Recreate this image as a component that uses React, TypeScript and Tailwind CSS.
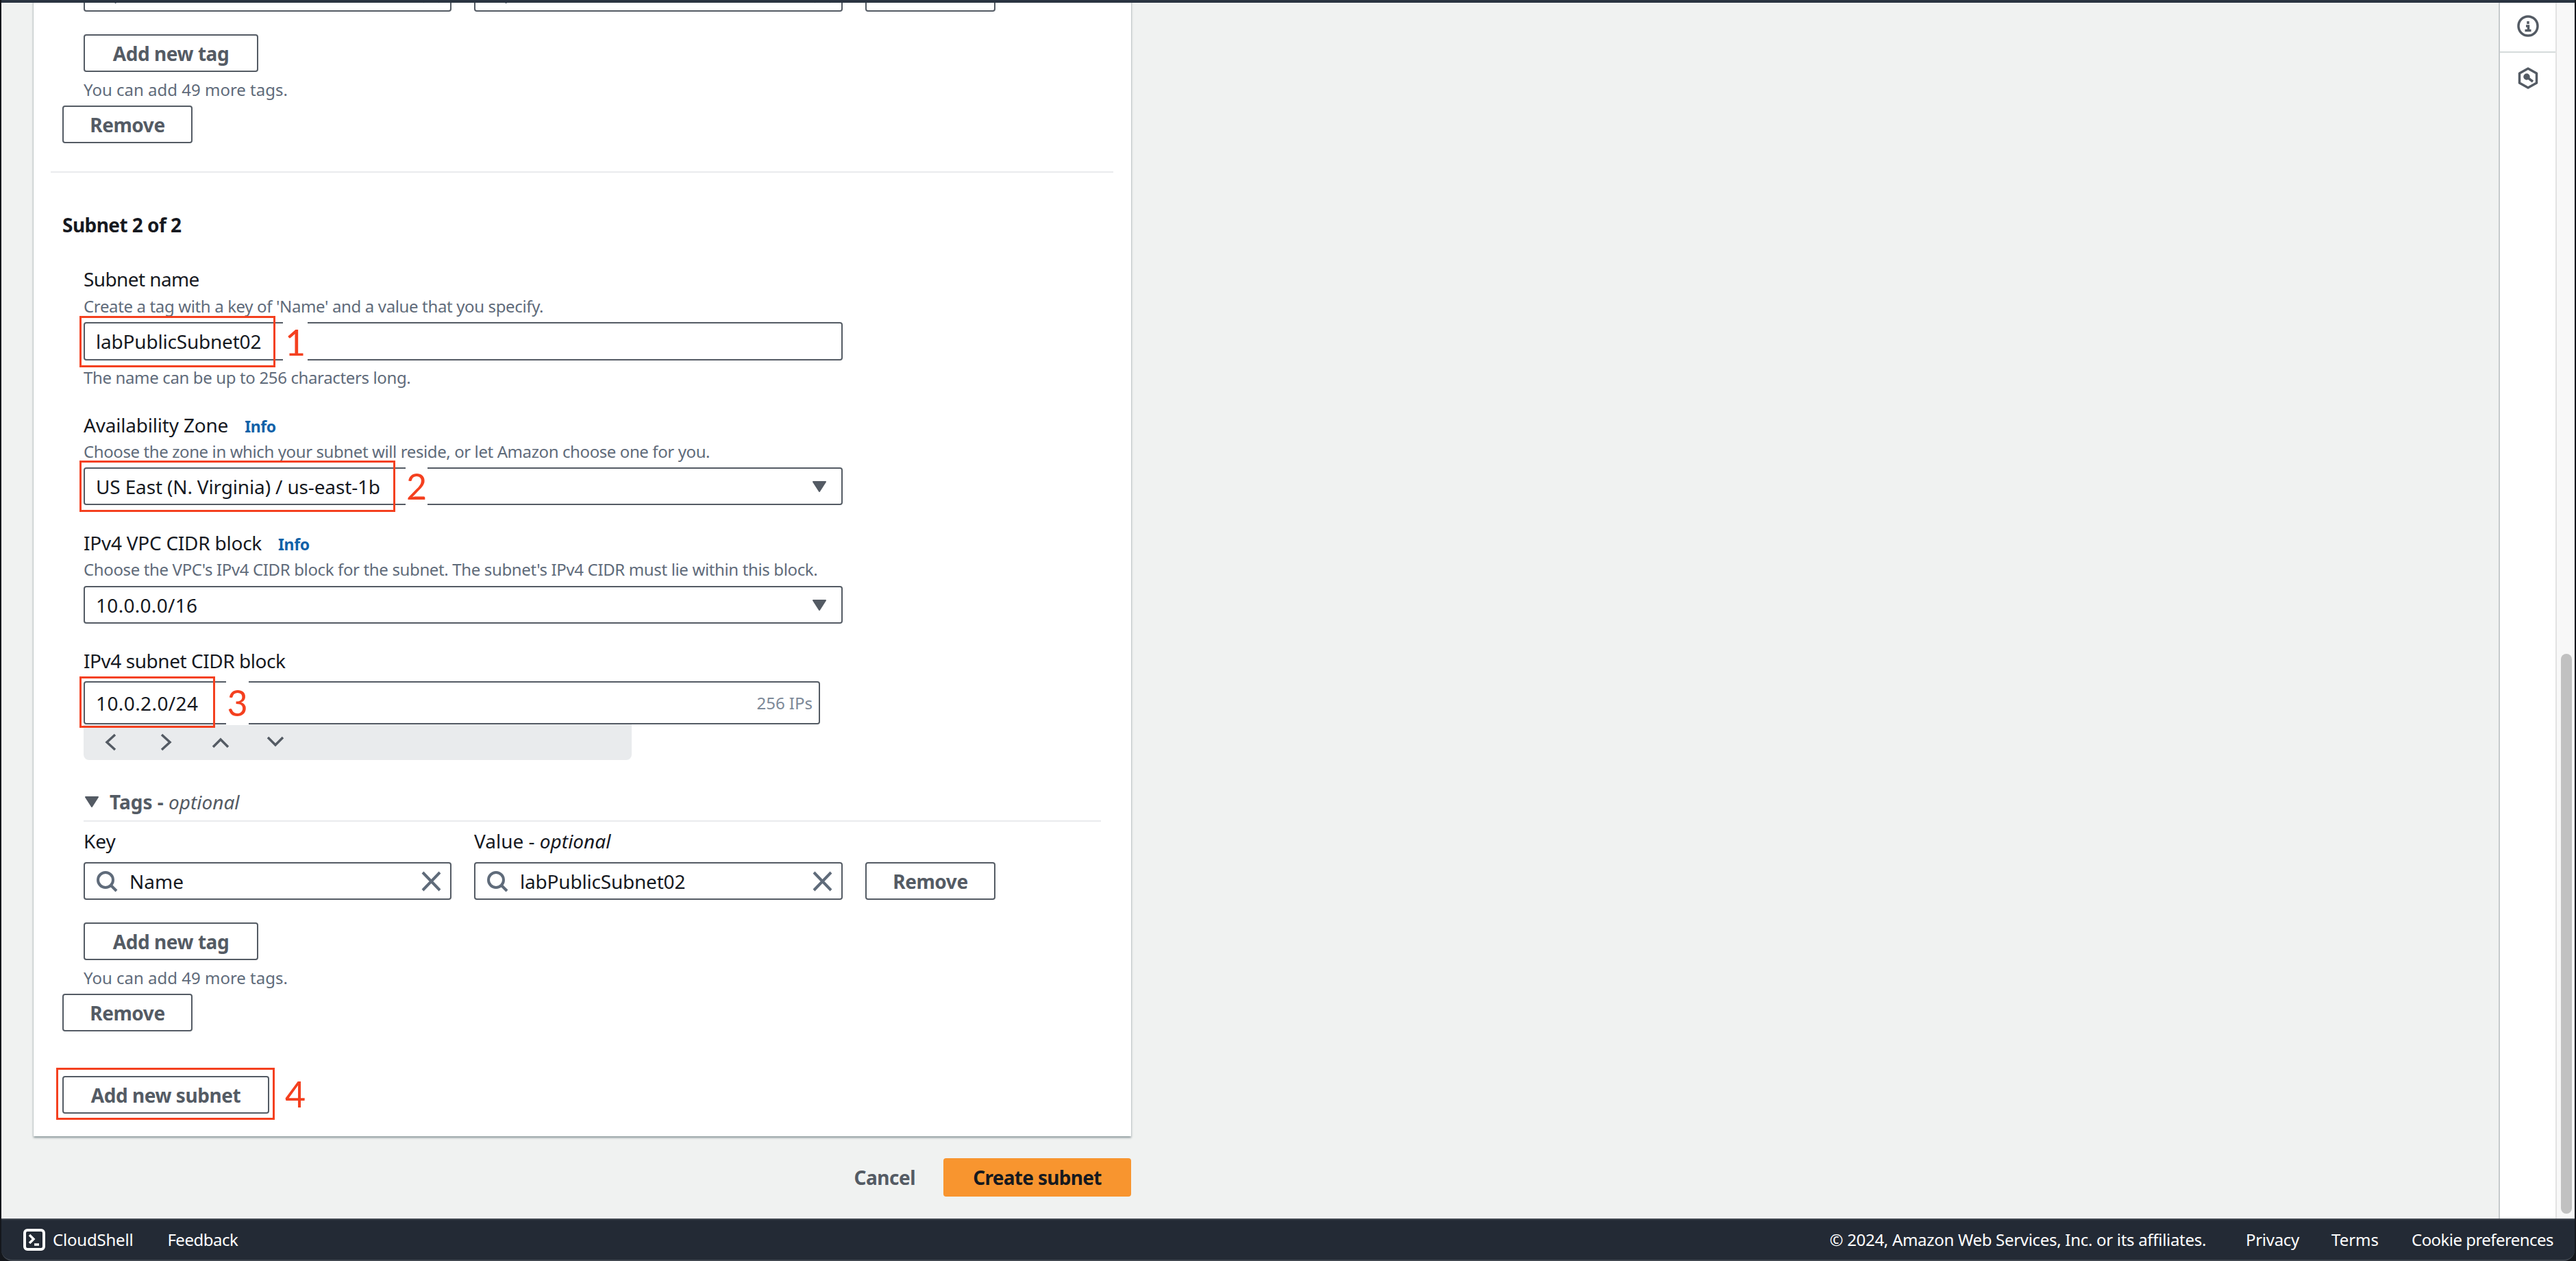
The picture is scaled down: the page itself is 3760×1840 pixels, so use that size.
import React from 'react'

const Label: React.FC<{ className?: string; children: React.ReactNode }> = ({ className = '', children }) => (
  <div className={`h-[32px] text-[28px] leading-[30px] text-[#16191f] whitespace-nowrap ${className}`}>{children}</div>
)

const Help: React.FC<{ className?: string; children: React.ReactNode }> = ({ className = '', children }) => (
  <div className={`h-[32px] text-[24px] leading-[32px] text-[#5f6b7a] whitespace-nowrap ${className}`}>{children}</div>
)

const Button: React.FC<{ className?: string; children: React.ReactNode }> = ({ className = '', children }) => (
  <button className={`flex h-[55px] items-center justify-center rounded-[4px] border-2 border-[#545b64] bg-white text-[28px] font-bold tracking-[-0.45px] text-[#545b64] ${className}`}>
    {children}
  </button>
)

const Info: React.FC = () => <span className="text-[23px] font-bold tracking-[-0.4px] text-[#0f62a8]">Info</span>

const Caret: React.FC<{ className?: string }> = ({ className = '' }) => (
  <svg viewBox="0 0 20 16" className={`h-[16px] w-[20px] ${className}`}>
    <path d="M1 1h18L10 15z" fill="#545b64" stroke="#545b64" strokeWidth="2" strokeLinejoin="round" />
  </svg>
)

const Search: React.FC = () => (
  <svg viewBox="0 0 32 32" className="h-[32px] w-[32px] shrink-0" fill="none" stroke="#5f6b7a" strokeWidth="4">
    <circle cx="14" cy="14" r="11" />
    <path d="M22 22l8 8" />
  </svg>
)

const Close: React.FC = () => (
  <svg viewBox="0 0 32 32" className="h-[32px] w-[32px] shrink-0" fill="none" stroke="#5f6b7a" strokeWidth="4">
    <path d="M4 3l25 26M29 3L4 29" />
  </svg>
)

const Chevron: React.FC<{ d: string }> = ({ d }) => (
  <svg viewBox="0 0 32 32" className="h-[32px] w-[32px]" fill="none" stroke="#545b64" strokeWidth="3.5">
    <path d={d} />
  </svg>
)

// red box + numbered callout drawn over a field
const Annotation: React.FC<{ box: string; gap: string; num: string }> = ({ box, gap, num }) => (
  <>
    <div className={`absolute flex items-center justify-center bg-white text-[52px] font-normal leading-none tracking-normal text-[#f4401f] [font-family:Lato,sans-serif] ${gap}`}>{num}</div>
    <div className={`absolute border-[3px] border-[#f4401f] ${box}`} />
  </>
)

const TagRow: React.FC<{ tagValue: string }> = ({ tagValue }) => (
  <div className="flex h-[55px] ml-[31px]">
    <div className="flex w-[537px] items-center rounded-[4px] border-2 border-[#545b64] pl-[16px] pr-[12px] text-[28px] text-[#16191f]">
      <Search />
      <span className="ml-[17px] flex-1">Name</span>
      <Close />
    </div>
    <div className="ml-[33px] flex w-[538px] items-center rounded-[4px] border-2 border-[#545b64] pl-[16px] pr-[12px] text-[28px] tracking-[-0.2px] text-[#16191f]">
      <Search />
      <span className="ml-[17px] flex-1">{tagValue}</span>
      <Close />
    </div>
    <Button className="ml-[33px] w-[190px]">Remove</Button>
  </div>
)

const TagFooter: React.FC = () => (
  <>
    <Button className="mt-[33px] ml-[31px] w-[255px]">Add new tag</Button>
    <Help className="mt-[10px] ml-[31px]">You can add 49 more tags.</Help>
    <Button className="mt-[7px] w-[190px]">Remove</Button>
  </>
)

export default function App() {
  return (
    <div className="flex h-[1840px] w-[3760px] flex-col overflow-hidden bg-[#14171c] px-[2px] text-[#16191f] [font-family:'Noto_Sans',sans-serif]">
      <div className="h-[4px] shrink-0 bg-[#2a3441]" />

      <div className="flex min-h-0 flex-1">
        <div className="min-w-0 flex-1 overflow-hidden bg-[#f0f2f1] pl-[47px]">
          <div className="w-[1602px] bg-white pl-[42px] pb-[33px] shadow-[0_2px_3px_rgba(0,28,36,0.45)]">
            <div className="-mt-[42px]">
              <TagRow tagValue="labPublicSubnet01" />
            </div>
            <TagFooter />

            <div className="mt-[41px] -ml-[17px] h-[2px] w-[1551px] bg-[#e9ebed]" />

            <div className="mt-[58px] h-[36px] text-[28px] font-bold leading-[36px] tracking-[-0.55px]">Subnet 2 of 2</div>

            <div className="ml-[31px]">
              <Label className="mt-[46px] tracking-[-0.6px]">Subnet name</Label>
              <Help className="mt-[7px] tracking-[-0.36px]">Create a tag with a key of 'Name' and a value that you specify.</Help>
              <div className="relative mt-[7px] flex h-[56px] w-[1108px] items-center rounded-[4px] border-2 border-[#545b64] pl-[16px] text-[28px] tracking-[-0.2px]">
                labPublicSubnet02
                <Annotation gap="left-[289px] -top-[4px] h-[62px] w-[36px]" box="-left-[8px] -top-[11px] h-[75px] w-[286px]" num="1" />
              </div>
              <Help className="mt-[9px] tracking-[-0.36px]">The name can be up to 256 characters long.</Help>

              <Label className="mt-[38px] tracking-[-0.2px]">
                Availability Zone<span className="ml-[24px]"><Info /></span>
              </Label>
              <Help className="mt-[6px] tracking-[-0.4px]">Choose the zone in which your subnet will reside, or let Amazon choose one for you.</Help>
              <div className="relative mt-[7px] flex h-[55px] w-[1108px] items-center justify-between rounded-[4px] border-2 border-[#545b64] pl-[16px] pr-[22px] text-[28px] tracking-[-0.15px]">
                US East (N. Virginia) / us-east-1b
                <Caret />
                <Annotation gap="left-[468px] -top-[6px] h-[62px] w-[32px]" box="-left-[8px] -top-[12px] h-[75px] w-[461px]" num="2" />
              </div>

              <Label className="mt-[40px] tracking-[-0.25px]">
                IPv4 VPC CIDR block<span className="ml-[24px]"><Info /></span>
              </Label>
              <Help className="mt-[6px] tracking-[-0.36px]">Choose the VPC's IPv4 CIDR block for the subnet. The subnet's IPv4 CIDR must lie within this block.</Help>
              <div className="mt-[8px] flex h-[55px] w-[1108px] items-center justify-between rounded-[4px] border-2 border-[#545b64] pl-[16px] pr-[22px] text-[28px] tracking-[0.3px]">
                10.0.0.0/16
                <Caret />
              </div>

              <Label className="mt-[39px] tracking-[-0.45px]">IPv4 subnet CIDR block</Label>
              <div className="relative mt-[13px] flex h-[63px] w-[1075px] items-center justify-between rounded-[4px] border-2 border-[#545b64] pl-[16px] pr-[9px] text-[28px] tracking-[0.4px]">
                10.0.2.0/24
                <span className="text-[24px] tracking-normal text-[#7d8998]">256 IPs</span>
                <Annotation gap="left-[206px] -top-[4px] h-[66px] w-[33px]" box="-left-[8px] -top-[9px] h-[75px] w-[198px]" num="3" />
              </div>
              <div className="flex h-[52px] w-[800px] items-center gap-[48px] rounded-b-[8px] bg-[#e9ebed] pl-[24px]">
                <Chevron d="M22 5L10 16l12 11" />
                <Chevron d="M10 5l12 11-12 11" />
                <Chevron d="M5 23l11-11 11 11" />
                <Chevron d="M5 9l11 11 11-11" />
              </div>

              <div className="mt-[45px] flex h-[32px] items-center pl-[2px]">
                <Caret />
                <span className="ml-[16px] text-[28px] font-bold text-[#545b64]">
                  Tags - <span className="font-normal italic">optional</span>
                </span>
              </div>
              <div className="mt-[11px] h-[2px] w-[1485px] bg-[#e9ebed]" />
              <div className="mt-[13px] flex h-[32px] text-[28px] leading-[30px]">
                <span className="w-[570px]">Key</span>
                <span>
                  Value - <span className="italic">optional</span>
                </span>
              </div>
            </div>

            <div className="mt-[14px]">
              <TagRow tagValue="labPublicSubnet02" />
            </div>
            <TagFooter />

            <div className="relative mt-[65px] w-[302px]">
              <Button className="w-[302px]">Add new subnet</Button>
              <Annotation gap="left-[322px] top-[6px] h-[40px] w-[36px]" box="-left-[9px] -top-[12px] h-[76px] w-[319px]" num="4" />
            </div>
          </div>

          <div className="mt-[32px] flex w-[1602px] items-center justify-end">
            <span className="mr-[41px] text-[28px] font-bold tracking-[-0.5px] text-[#545b64]">Cancel</span>
            <button className="flex h-[56px] w-[274px] items-center justify-center rounded-[4px] bg-[#f8952f] text-[28px] font-bold tracking-[-0.7px] text-[#16191f]">
              Create subnet
            </button>
          </div>
        </div>

        <div className="w-[81px] shrink-0 border-l-2 border-[#c6cbcd] bg-white box-content">
          <div className="flex h-[73px] items-center justify-center border-b-2 border-[#d5dbdb] pb-[3px]">
            <svg viewBox="0 0 32 32" className="h-[32px] w-[32px]" fill="none" stroke="#545b64" strokeWidth="3.5">
              <circle cx="16" cy="16" r="14" />
              <path d="M16 9v4" strokeWidth="3.5" />
              <path d="M13 16h3.5v6M11.5 22.5h9" strokeWidth="3.5" />
            </svg>
          </div>
          <div className="flex justify-center pt-[21px]">
            <svg viewBox="0 0 32 32" className="h-[32px] w-[32px]" fill="none" stroke="#545b64" strokeWidth="3.5" strokeLinejoin="round">
              <path d="M16 2l12.5 7v14L16 30 3.5 23V9z" />
              <circle cx="14" cy="14" r="3" fill="#545b64" />
              <path d="M15 15l8 6" />
            </svg>
          </div>
        </div>

        <div className="w-[28px] shrink-0 border-l-2 border-[#e3e3e3] bg-[#f8f8f8] pl-[6px] pt-[950px] box-border">
          <div className="h-[817px] w-[16px] rounded-full bg-[#c1c1c1]" />
        </div>
      </div>

      <div className="flex h-[62px] shrink-0 items-center rounded-b-[16px] border-y-2 border-[#414750] bg-[#232a35] text-[24px] text-white">
        <svg viewBox="0 0 32 32" className="ml-[32px] h-[32px] w-[32px]" fill="none" stroke="#fff" strokeWidth="4">
          <rect x="2" y="2" width="28" height="28" rx="4" />
          <path d="M9 9l6 6-6 6M16 23h7" strokeWidth="3.5" />
        </svg>
        <span className="ml-[11px] tracking-[-0.2px]">CloudShell</span>
        <span className="ml-[50px] tracking-[-0.5px]">Feedback</span>
        <span className="ml-auto tracking-[-0.3px]">© 2024, Amazon Web Services, Inc. or its affiliates.</span>
        <span className="ml-[58px] tracking-[-0.3px]">Privacy</span>
        <span className="ml-[47px]">Terms</span>
        <span className="ml-[48px] mr-[31px] tracking-[-0.55px]">Cookie preferences</span>
      </div>
    </div>
  )
}
